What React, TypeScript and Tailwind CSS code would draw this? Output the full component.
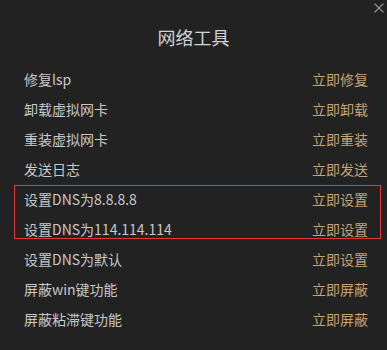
import { X } from 'lucide-react';

const rows = [
  { label: '修复lsp', action: '立即修复' },
  { label: '卸载虚拟网卡', action: '立即卸载' },
  { label: '重装虚拟网卡', action: '立即重装' },
  { label: '发送日志', action: '立即发送' },
  { label: '设置DNS为8.8.8.8', action: '立即设置' },
  { label: '设置DNS为114.114.114', action: '立即设置' },
  { label: '设置DNS为默认', action: '立即设置' },
  { label: '屏蔽win键功能', action: '立即屏蔽' },
  { label: '屏蔽粘滞键功能', action: '立即屏蔽' },
];

export default function App() {
  return (
    <div
      className="relative w-[387px] h-[350px] bg-[#222222] overflow-hidden"
      style={{ fontFamily: '"Microsoft YaHei", "Noto Sans CJK SC", "Noto Sans", sans-serif' }}
    >
      <button className="absolute top-[2px] right-[2px] w-[12px] h-[12px] flex items-center justify-center text-[#8a8a8a]">
        <X className="w-[16px] h-[16px] shrink-0" strokeWidth={2} />
      </button>

      <div className="h-[64px] pt-[27px] text-center text-[18px] leading-[20px] text-[#d2d2d2]">
        网络工具
      </div>

      <div className="flex flex-col">
        {rows.map((row, i) => (
          <div
            key={i}
            className="h-[30px] flex items-center justify-between pl-[24px] pr-[19px] text-[14px] leading-[30px]"
          >
            <span className="text-[#c8c8c8]">{row.label}</span>
            <span className="text-[#c4a376] cursor-pointer">{row.action}</span>
          </div>
        ))}
      </div>

      <div className="absolute left-[14px] top-[185px] w-[367px] h-[54px] border border-[#e5383b] pointer-events-none" />
    </div>
  );
}
